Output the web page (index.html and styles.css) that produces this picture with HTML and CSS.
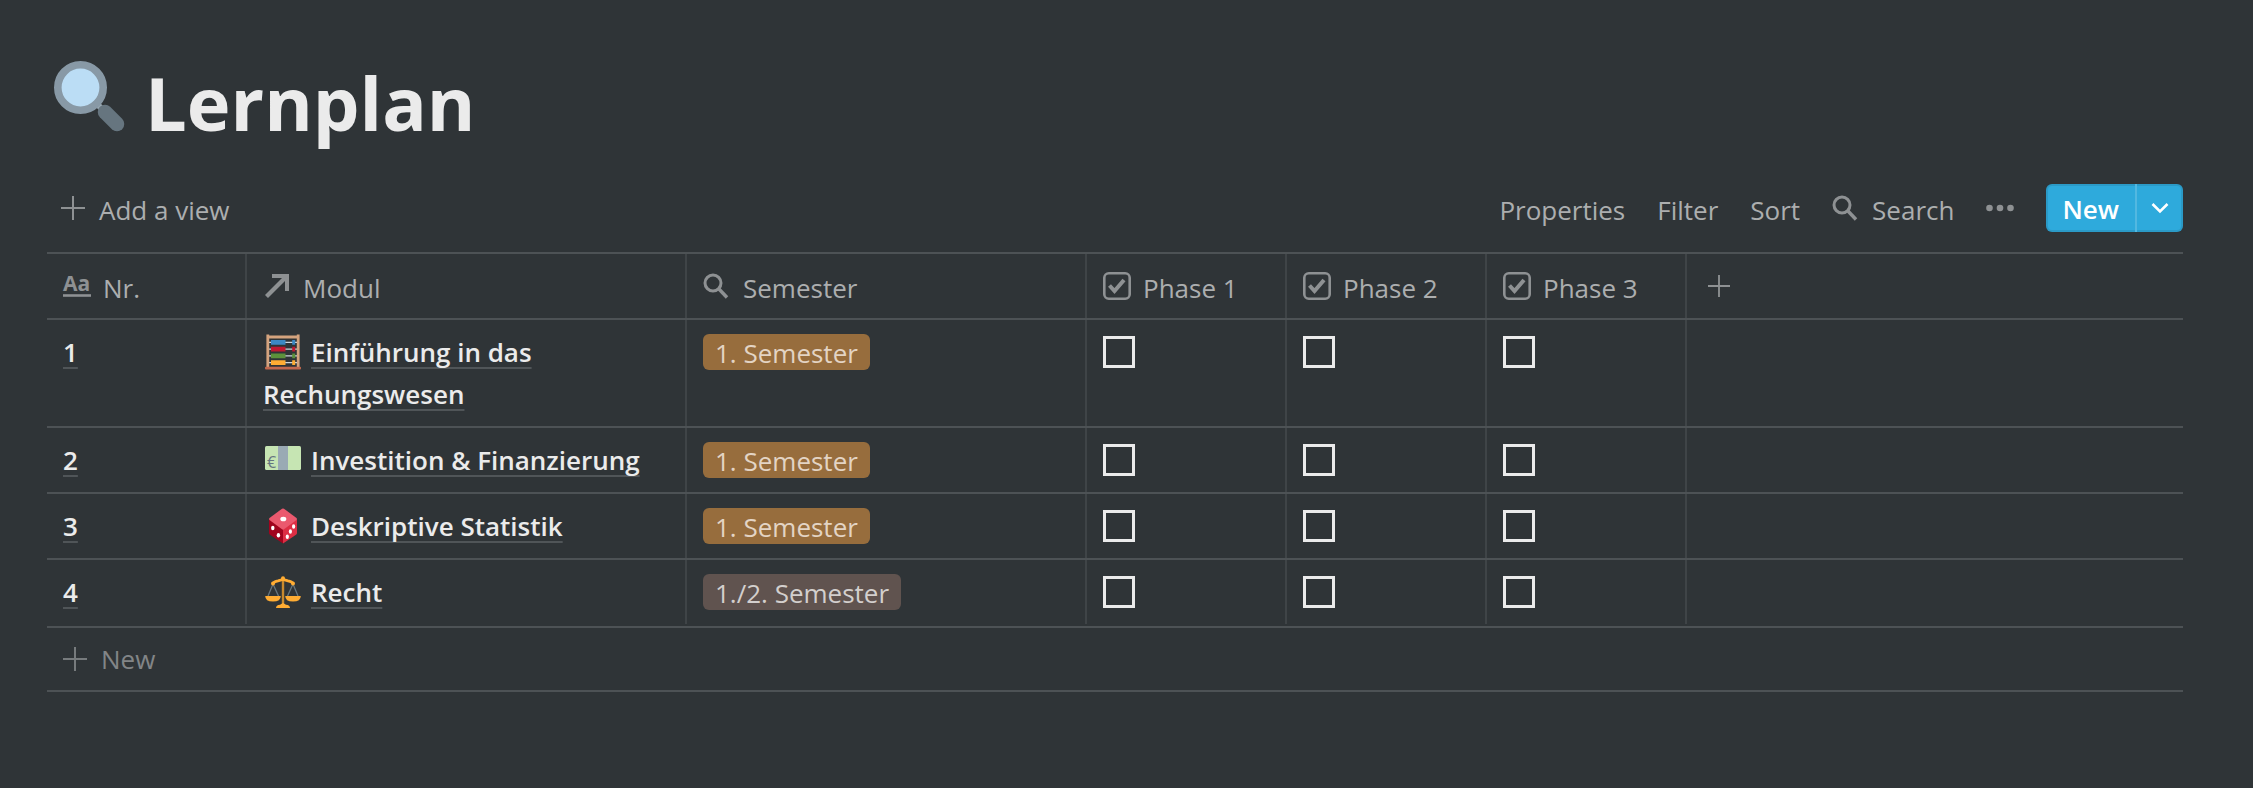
FILE: index.html
```html
<!DOCTYPE html>
<html lang="de">
<head>
<meta charset="utf-8"/>
<title>Lernplan</title>
<meta content="width=device-width, initial-scale=1.0" name="viewport"/>
<link rel="stylesheet" href="styles.css">
</head>
<body>
<!-- shared icons -->
<svg class="sprite" aria-hidden="true">
  <symbol id="plus" viewBox="0 0 24 24"><path d="M12 0v24M0 12h24" fill="none" stroke="currentColor" stroke-width="2"/></symbol>
  <symbol id="search" viewBox="0 0 28 28"><circle cx="10" cy="11" r="8" fill="none" stroke="currentColor" stroke-width="3"/><path d="M15.500 16.500l8.500 9" stroke="currentColor" stroke-width="3.400"/></symbol>
  <symbol id="check" viewBox="0 0 28 28"><rect x="1.300" y="1.300" width="25.400" height="25.400" rx="4.500" fill="none" stroke="currentColor" stroke-width="2.600"/><path d="M6.500 13.500l5 5.500 9.500-11" fill="none" stroke="currentColor" stroke-width="4"/></symbol>
</svg>
<main class="page">
  <header class="title">
    <svg class="title-icon" viewBox="0 0 72 72" aria-hidden="true">
      <path d="M42 42l10 10" stroke="#9aaab4" stroke-width="6"/>
      <path d="M51 51l12 12" stroke="#66757f" stroke-width="14.500" stroke-linecap="round"/>
      <circle cx="26.500" cy="26.500" r="22.700" fill="#bbddf5" stroke="#8899a6" stroke-width="7.600"/>
    </svg>
    <h1>Lernplan</h1>
  </header>

  <div class="toolbar">
    <button class="tool add-view"><svg class="plus"><use href="#plus"/></svg>Add a view</button>
    <div class="tools">
      <button class="tool">Properties</button>
      <button class="tool">Filter</button>
      <button class="tool">Sort</button>
      <button class="tool search"><svg class="icon"><use href="#search"/></svg>Search</button>
      <button class="tool more" aria-label="More">
        <svg class="icon" viewBox="0 0 28 28"><g fill="currentColor"><circle cx="3.500" cy="14" r="3.300"/><circle cx="14" cy="14" r="3.300"/><circle cx="24.500" cy="14" r="3.300"/></g></svg>
      </button>
      <div class="new-group">
        <button class="new">New</button>
        <button class="new-menu" aria-label="New options">
          <svg viewBox="0 0 18 12"><path d="M1.500 2L9 9.500 16.500 2" fill="none" stroke="currentColor" stroke-width="2.600"/></svg>
        </button>
      </div>
    </div>
  </div>

  <table>
    <colgroup>
      <col class="col-small"><col class="col-modul"><col class="col-semester">
      <col class="col-small"><col class="col-small"><col class="col-small"><col>
    </colgroup>
    <thead>
      <tr>
        <th><div class="head">
          <svg class="icon" viewBox="0 0 28 28" aria-hidden="true"><text class="aa" x="0" y="19">Aa</text><path d="M0 23.500h28" stroke="currentColor" stroke-width="2.600"/></svg>
          Nr.</div></th>
        <th><div class="head">
          <svg class="icon" viewBox="0 0 28 28" aria-hidden="true"><path d="M9 2h17v17h-4V9L5 26 2 23 19 6H9z" fill="currentColor"/></svg>
          Modul</div></th>
        <th><div class="head"><svg class="icon"><use href="#search"/></svg>Semester</div></th>
        <th><div class="head"><svg class="icon"><use href="#check"/></svg>Phase 1</div></th>
        <th><div class="head"><svg class="icon"><use href="#check"/></svg>Phase 2</div></th>
        <th><div class="head"><svg class="icon"><use href="#check"/></svg>Phase 3</div></th>
        <th><button class="add-column" aria-label="Add column"><svg><use href="#plus"/></svg></button></th>
      </tr>
    </thead>
    <tbody>
      <tr>
        <td><a href="#">1</a></td>
        <td>
          <svg class="emoji" viewBox="0 0 36 36" aria-hidden="true">
            <path d="M4 8.400h28M4 15.100h28M4 21.900h28M4 28.600h28" stroke="#ccd6dd" stroke-width="1.400"/>
            <path d="M2.800 .5V34M33.200 .5V34M1.500 3h33" stroke="#d4a37e" stroke-width="2.800"/>
            <g stroke-width="4.800">
              <path d="M6 8.400h14.500M27.200 8.400h3" stroke="#3b88c3"/>
              <path d="M6 15.100h14.500M27.200 15.100h3" stroke="#be1931"/>
              <path d="M6 21.900h14.500M27.200 21.900h3" stroke="#5c913b"/>
              <path d="M6 28.600h14.500M27.200 28.600h3" stroke="#ffac33"/>
            </g>
            <rect y="32.800" width="36" height="2.800" rx="1" fill="#c1694f"/>
          </svg><a href="#">Einführung in das Rechungswesen</a>
        </td>
        <td><span class="tag orange">1. Semester</span></td>
        <td><input type="checkbox" aria-label="Phase 1"></td>
        <td><input type="checkbox" aria-label="Phase 2"></td>
        <td><input type="checkbox" aria-label="Phase 3"></td>
        <td></td>
      </tr>
      <tr>
        <td><a href="#">2</a></td>
        <td>
          <svg class="emoji" viewBox="0 0 36 36" aria-hidden="true">
            <rect y="4" width="36" height="24" rx="1.500" fill="#c6e5b3"/>
            <path d="M13 4h10v24H13z" fill="#9aaab4"/>
            <text class="euro" x="2" y="26">€</text>
          </svg><a href="#">Investition &amp; Finanzierung</a>
        </td>
        <td><span class="tag orange">1. Semester</span></td>
        <td><input type="checkbox" aria-label="Phase 1"></td>
        <td><input type="checkbox" aria-label="Phase 2"></td>
        <td><input type="checkbox" aria-label="Phase 3"></td>
        <td></td>
      </tr>
      <tr>
        <td><a href="#">3</a></td>
        <td>
          <svg class="emoji" viewBox="0 0 36 36" aria-hidden="true">
            <path d="M18 20L4 11v14q0 1 1 1.700L18 35.500z" fill="#a0041e"/>
            <path d="M18 20l14-9v14q0 1-1 1.700L18 35.500z" fill="#dd2e44"/>
            <path d="M17 .8q1-.7 2 0L31.500 10q1 1 0 1.900L19 21.300q-1 .7-2 0L4.500 11.900q-1-.9 0-1.900z" fill="#ea596e"/>
            <g fill="#fff">
              <ellipse cx="18.300" cy="11" rx="3" ry="2.300"/>
              <ellipse cx="7.800" cy="20" rx="1.700" ry="2.200"/><ellipse cx="13.400" cy="27.300" rx="1.700" ry="2.200"/>
              <ellipse cx="28.600" cy="18.500" rx="1.600" ry="2.200"/><ellipse cx="25.400" cy="23.500" rx="1.600" ry="2.200"/><ellipse cx="22.300" cy="28.700" rx="1.600" ry="2.200"/>
            </g>
          </svg><a href="#">Deskriptive Statistik</a>
        </td>
        <td><span class="tag orange">1. Semester</span></td>
        <td><input type="checkbox" aria-label="Phase 1"></td>
        <td><input type="checkbox" aria-label="Phase 2"></td>
        <td><input type="checkbox" aria-label="Phase 3"></td>
        <td></td>
      </tr>
      <tr>
        <td><a href="#">4</a></td>
        <td>
          <svg class="emoji" viewBox="0 0 36 36" aria-hidden="true">
            <path d="M8 10L3 22M8 10l5.500 12M28 10l-5.500 12M28 10l5 12" stroke="#66757f" stroke-width="1.300"/>
            <path d="M18 4v27" stroke="#c98a2e" stroke-width="2.400"/>
            <path d="M8 9.500Q9 7.500 13 6.800L18 5.500l5 1.300q4 .7 5 2.700" fill="none" stroke="#ffac33" stroke-width="2.800"/>
            <g fill="#ffac33">
              <circle cx="18" cy="4.200" r="2"/><circle cx="8" cy="9.500" r="2"/><circle cx="28" cy="9.500" r="2"/>
              <path d="M.2 22h15.600q0 5.500-7.800 5.500T.2 22zM20.200 22h15.600q0 5.500-7.800 5.500t-7.800-5.500z"/>
              <path d="M11 34q0-3 4-3.300l3-1.700 3 1.700q4 .3 4 3.300z"/>
            </g>
          </svg><a href="#">Recht</a>
        </td>
        <td><span class="tag brown">1./2. Semester</span></td>
        <td><input type="checkbox" aria-label="Phase 1"></td>
        <td><input type="checkbox" aria-label="Phase 2"></td>
        <td><input type="checkbox" aria-label="Phase 3"></td>
        <td></td>
      </tr>
    </tbody>
  </table>
  <button class="new-row"><svg class="plus"><use href="#plus"/></svg>New</button>
</main>
</body>
</html>
```
FILE: styles.css
```css
* { box-sizing: border-box; }
body {
  margin: 0;
  background: #2f3437;
  color: #ebebeb;
  font-family: "Segoe UI", "Open Sans", "Noto Sans", sans-serif;
  font-size: 26px;
  line-height: 42px;
}
svg { flex: none; }
button {
  display: flex;
  align-items: center;
  padding: 0;
  border: none;
  background: none;
  color: inherit;
  font: inherit;
  cursor: pointer;
}
.sprite { display: none; }
.page { padding: 48px 70px 48px 47px; }
.icon {
  width: 28px;
  height: 28px;
  color: #8e9193;
  overflow: visible;
}
.plus {
  width: 24px;
  height: 24px;
  color: #8e9193;
}
.title {
  display: flex;
  align-items: center;
  gap: 19px;
  padding-left: 7px;
}
.title-icon {
  width: 72px;
  height: 72px;
  margin-bottom: 14px;
}
h1 {
  margin: 0;
  padding-bottom: 2px;
  font-size: 74px;
  font-weight: 700;
  line-height: 110px;
}
.toolbar {
  display: flex;
  align-items: center;
  justify-content: space-between;
  padding: 24px 0 20px;
}
.tools {
  display: flex;
  align-items: center;
  gap: 32px;
}

/* labels sit a little lower than their icons */
.tool, .head {
  display: flex;
  align-items: center;
  padding-top: 4px;
  line-height: 38px;
}
.tool svg, .head svg { margin-bottom: 4px; }
.tool { color: #acaeaf; }
.add-view {
  gap: 14px;
  padding-left: 14px;
}
.search, .head { gap: 12px; }
.new-group {
  display: flex;
  height: 48px;
  border-radius: 6px;
  background: #2eaadc;
  box-shadow: inset 0 0 0 2px rgba(15,15,15,0.1);
  color: #fff;
}
.new {
  padding: 2px 16px 0;
  font-weight: 600;
}
.new-menu {
  justify-content: center;
  width: 48px;
  border-left: 2px solid #52b8e1;
}
.new-menu svg {
  width: 18px;
  height: 12px;
}
table {
  width: 100%;
  table-layout: fixed;
  border-collapse: separate;
  border-spacing: 0;
}
.col-small { width: 200px; }
.col-modul { width: 440px; }
.col-semester { width: 400px; }
th, td {
  padding: 11px 16px;
  border-bottom: 2px solid #4d5255;
  box-shadow: inset -2px 0 0 #3f4447;
  text-align: left;
  vertical-align: top;
}
th:last-child, td:last-child { box-shadow: none; }
th {
  border-top: 2px solid #4d5255;
  color: #acaeaf;
  font-weight: 400;
}
tbody tr:last-child td { border-bottom-color: transparent; }
.aa {
  fill: currentColor;
  font-size: 21px;
  font-weight: 700;
}
.euro {
  fill: #66757f;
  font-size: 16px;
}
.add-column {
  justify-content: center;
  width: 32px;
  height: 42px;
  color: #8e9193;
}
.add-column svg {
  width: 22px;
  height: 22px;
}
td a {
  color: inherit;
  font-weight: 600;
  text-decoration: underline #505558 2px;
  text-underline-offset: 5px;
  text-decoration-skip-ink: none;
}
.emoji {
  width: 36px;
  height: 36px;
  margin: 0 10px 0 2px;
  vertical-align: -8px;
}
.tag {
  display: block;
  width: fit-content;
  height: 36px;
  margin: 3px 0;
  padding: 0 12px;
  border-radius: 6px;
  line-height: 38px;
}
.orange {
  background: #976d3d;
  color: #e3d4c4;
}
.brown {
  background: #60534f;
  color: #d3cfcd;
}
input[type=checkbox] {
  appearance: none;
  display: block;
  width: 32px;
  height: 32px;
  margin: 5px 0;
  border: 3px solid #ebebeb;
}
.new-row {
  gap: 14px;
  width: 100%;
  height: 66px;
  padding-left: 16px;
  border-top: 2px solid #4d5255;
  border-bottom: 2px solid #4d5255;
  color: #828587;
}
.new-row .plus { color: #777b7d; }
```
